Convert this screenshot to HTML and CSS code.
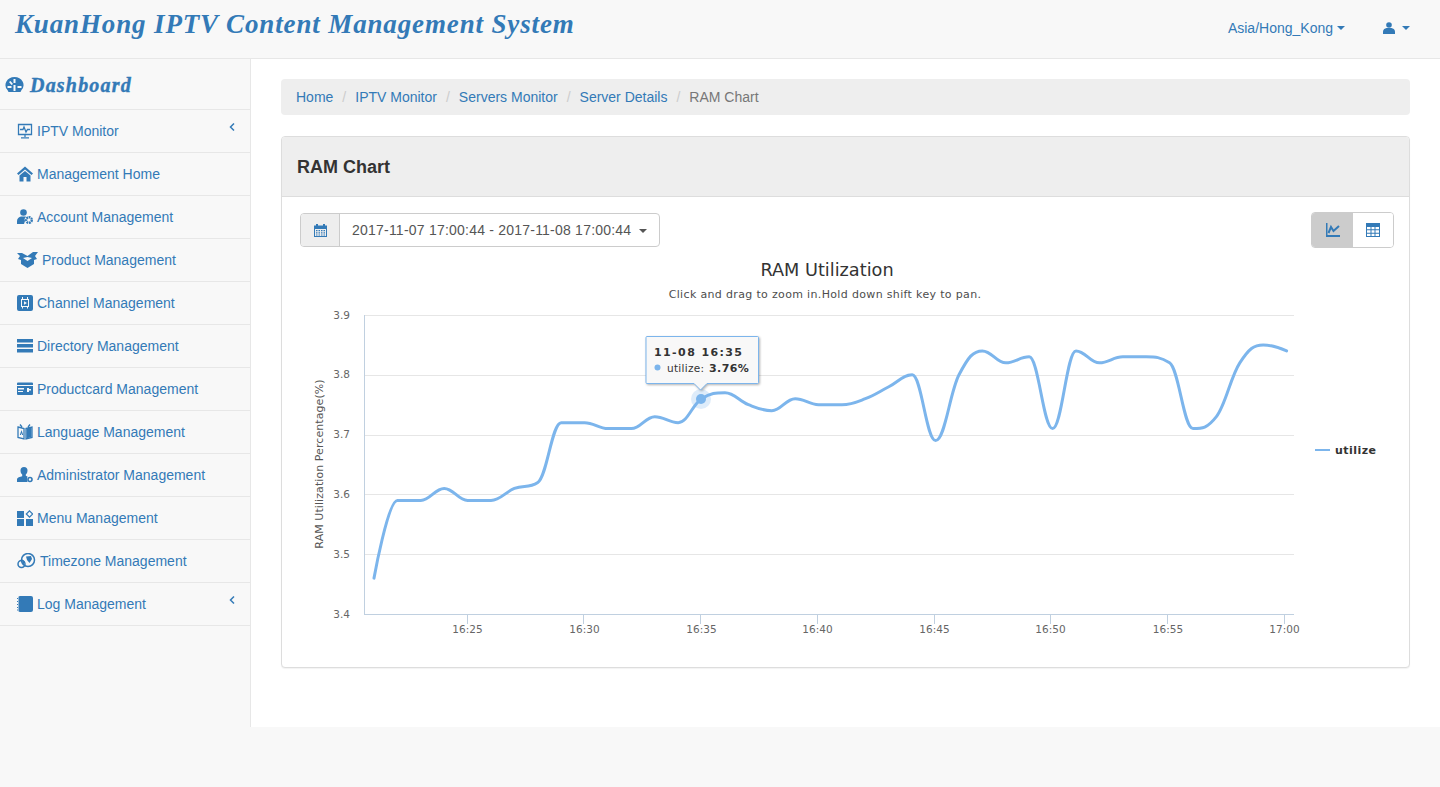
FILE: index.html
```html
<!DOCTYPE html>
<html lang="en">
<head>
<meta charset="utf-8">
<title>RAM Chart</title>
<link rel="stylesheet" href="styles.css">
</head>
<body>
<header class="navbar">
  <a class="brand">KuanHong IPTV Content Management System</a>
  <nav class="nav-right">
    <a class="nav-link">Asia/Hong_Kong<span class="caret"></span></a>
    <a class="nav-link nav-user">
      <svg class="user-ico" viewBox="0 0 12 12"><circle cx="6" cy="3" r="2.800"/><path d="M0 12V9.500C0 7.500 2 6.300 3.500 6h5C10 6.300 12 7.500 12 9.500V12z"/></svg>
      <span class="caret"></span>
    </a>
  </nav>
</header>
<div class="layout">
  <aside class="sidebar">
    <div class="side-head">
      <svg class="ico" viewBox="0 0 18 16"><path fill-rule="evenodd" d="M9 0a9 8 0 0 1 7 13l-1 2H3l-1-2A9 8 0 0 1 9 0zM8 2v4h2V2zM3.500 5l2.500 3 1.500-1-2.500-3zM2 9v2h4V9zM8 8v6h2V8zM12 9v2h4V9z"/></svg>
      <span class="side-title">Dashboard</span>
    </div>
    <ul class="menu">
      <li><a class="item">
        <svg class="ico" viewBox="0 0 16 16"><path d="M1.500 1.500h13v10h-13zM3 6.500h3l1-2.500 2 5 1.500-2.500H13M8 11.500V14M4 14.800h8" fill="none" stroke="currentColor" stroke-width="1.300"/></svg>
        <span>IPTV Monitor</span><svg class="chev" viewBox="0 0 6 8"><path d="M5 .5L1.500 4 5 7.500" fill="none" stroke="currentColor" stroke-width="1.500"/></svg></a></li>
      <li><a class="item">
        <svg class="ico" viewBox="0 0 16 16"><path d="M8 .5L0 7.500 1.500 9 8 3.500 14.500 9 16 7.500zM2.500 9.500L8 5l5.500 4.500v6h-4V11h-3v4.500h-4z"/></svg>
        <span>Management Home</span></a></li>
      <li><a class="item">
        <svg class="ico" viewBox="0 0 16 16"><circle cx="6.500" cy="3.500" r="3.300"/><path d="M0 15v-3c0-2.500 2-4 4-4.500h5L7.500 10l.5 2-1 3z"/><circle cx="12" cy="11" r="2.800" fill="none" stroke="currentColor" stroke-width="2.400" stroke-dasharray="1.800 .7"/></svg>
        <span>Account Management</span></a></li>
      <li><a class="item">
        <svg class="ico ico-wide" viewBox="0 0 21 16"><path d="M0 1l5 0 5.500 3L16 0h5l-3 4 2 3-3 1v4l-6.500 4L4 12V8L1 7l2-3zM6 6l4.500 3L15 6l-4.500-1z"/></svg>
        <span>Product Management</span></a></li>
      <li><a class="item">
        <svg class="ico" viewBox="0 0 16 16"><path fill-rule="evenodd" d="M2 0h12a2 2 0 0 1 2 2v12a2 2 0 0 1-2 2H2a2 2 0 0 1-2-2V2a2 2 0 0 1 2-2zM4 4v8h8V4zM5 5h6v6H5zM7 6.200v3.600L10 8zM5 2h1v2H5zM10 2h1v2h-1zM5 12h1v1.500H5zM10 12h1v1.500h-1z"/></svg>
        <span>Channel Management</span></a></li>
      <li><a class="item">
        <svg class="ico" viewBox="0 0 16 16"><path d="M0 1h16v3.500H0zM0 6h16v3.500H0zM0 11h16v3.500H0z"/></svg>
        <span>Directory Management</span></a></li>
      <li><a class="item">
        <svg class="ico" viewBox="0 0 16 16"><path fill-rule="evenodd" d="M1 1.500h14a1 1 0 0 1 1 1V13a1 1 0 0 1-1 1H1a1 1 0 0 1-1-1V2.500a1 1 0 0 1 1-1zM0 4v1h16V4zM1 7v1.500h6V7zM1 10v1h5v-1zM10 7v4h2V9.500h2V8h-2V7z"/></svg>
        <span>Productcard Management</span></a></li>
      <li><a class="item">
        <svg class="ico" viewBox="0 0 16 16"><path d="M1 3l6 1.500V15L1 13.500zM9 4.500L15 3v10.500L9 15zM3 .5l2 2.500M13 .5l-2 2.500" fill="none" stroke="currentColor" stroke-width="1.300"/><path d="M9.500 4.500l5-1.500v10l-5 1.500zM2.800 11l1.700-5 1.700 5H5.100l-.6-2-.6 2z"/></svg>
        <span>Language Management</span></a></li>
      <li><a class="item">
        <svg class="ico" viewBox="0 0 16 16"><path d="M7 0a3.500 3.500 0 0 1 3.500 3.500c0 2-.7 3.200-1.700 4v1.200l1.700.8-.5 2 .5 3.500H0v-2.500c0-2 3-2.800 5.200-3.300V7.500c-1-.8-1.700-2-1.700-4A3.500 3.500 0 0 1 7 0z"/><circle cx="13" cy="12.500" r="2" fill="none" stroke="currentColor" stroke-width="1.600"/></svg>
        <span>Administrator Management</span></a></li>
      <li><a class="item">
        <svg class="ico" viewBox="0 0 16 16"><path d="M0 1h7v7H0zM0 9h7v7H0zM9 9h7v7H9z"/><path d="M12.500.8l3.200 3.200-3.200 3.200L9.300 4z" fill="none" stroke="currentColor" stroke-width="1.200"/></svg>
        <span>Menu Management</span></a></li>
      <li><a class="item">
        <svg class="ico ico-globe" viewBox="0 0 19 16"><circle cx="11" cy="7" r="6.500" fill="none" stroke="currentColor" stroke-width="1.500"/><path d="M9 3.500l5-.5 1 3-2.500 4L10 7zM5 6l2 2 1 1-2 3z"/><circle cx="4.500" cy="11" r="3.500" fill="none" stroke="currentColor" stroke-width="1.500"/></svg>
        <span>Timezone Management</span></a></li>
      <li><a class="item">
        <svg class="ico" viewBox="0 0 16 16"><path d="M3 0h11a2 2 0 0 1 2 2v12a2 2 0 0 1-2 2H3a2 2 0 0 1-1.500-.7V.7A2 2 0 0 1 3 0z"/><path d="M0 2.500h1M0 5.500h1M0 8.500h1M0 11.500h1M0 14h1" stroke="currentColor"/></svg>
        <span>Log Management</span><svg class="chev" viewBox="0 0 6 8"><path d="M5 .5L1.500 4 5 7.500" fill="none" stroke="currentColor" stroke-width="1.500"/></svg></a></li>
    </ul>
  </aside>
  <main class="content">
    <ol class="breadcrumb">
      <li><a>Home</a></li>
      <li><a>IPTV Monitor</a></li>
      <li><a>Servers Monitor</a></li>
      <li><a>Server Details</a></li>
      <li class="active">RAM Chart</li>
    </ol>
    <section class="card">
      <h2 class="card-head">RAM Chart</h2>
      <div class="card-body">
        <div class="toolbar">
          <div class="range">
            <span class="range-addon">
              <svg class="cal" viewBox="0 0 13 13"><path fill-rule="evenodd" d="M0 1.500h2V0h2v1.500h5V0h2v1.500h2V13H0zM1 5v7h11V5zM2 6h1.500v1.200H2zM4.500 6H6v1.200H4.500zM7 6h1.500v1.200H7zM9.500 6H11v1.200H9.500zM2 8.200h1.500v1.200H2zM4.500 8.200H6v1.200H4.500zM7 8.200h1.500v1.200H7zM9.500 8.200H11v1.200H9.500zM2 10.400h1.500v1.200H2zM4.500 10.400H6v1.200H4.500zM7 10.400h1.500v1.200H7zM9.500 10.400H11v1.200H9.500z"/></svg>
            </span>
            <span class="range-value">2017-11-07 17:00:44 - 2017-11-08 17:00:44<span class="caret caret-dark"></span></span>
          </div>
          <div class="view-switch">
            <span class="view-btn is-active">
              <svg class="view-ico" viewBox="0 0 14 14"><path d="M0 0h1.500v12H14v2H0z"/><path d="M2.500 10l2.500-6 2.500 4L13 3" fill="none" stroke="currentColor" stroke-width="2"/></svg>
            </span>
            <span class="view-btn">
              <svg class="view-ico" viewBox="0 0 14 14"><path fill-rule="evenodd" d="M0 0h14v14H0zM1 4v2.300h3.500V4zM5.500 4v2.300h3V4zM9.500 4v2.300H13V4zM1 7.300v2.400h3.500V7.300zM5.500 7.300v2.400h3V7.300zM9.500 7.300v2.400H13V7.300zM1 10.700V13h3.500v-2.300zM5.500 10.700V13h3v-2.300zM9.500 10.700V13H13v-2.300z"/></svg>
            </span>
          </div>
        </div>
        <svg class="chart" viewBox="282 250 1127 417">
          <text class="c-title" x="827" y="276">RAM Utilization</text>
          <text class="c-sub" x="825" y="298">Click and drag to zoom in.Hold down shift key to pan.</text>
          <g class="grid">
            <path d="M364 315.500H1294M364 375.500H1294M364 435.500H1294M364 494.500H1294M364 554.500H1294"/>
          </g>
          <g class="axis">
            <path d="M364.500 315V614M364 614.500H1294M467.500 614V624M583.500 614V624M700.500 614V624M817.500 614V624M934.500 614V624M1050.500 614V624M1167.500 614V624M1284.500 614V624"/>
          </g>
          <g class="y-labels">
            <text x="350" y="319">3.9</text>
            <text x="350" y="378">3.8</text>
            <text x="350" y="438">3.7</text>
            <text x="350" y="498">3.6</text>
            <text x="350" y="558">3.5</text>
            <text x="350" y="618">3.4</text>
          </g>
          <g class="x-labels">
            <text x="467.500" y="633">16:25</text>
            <text x="584.500" y="633">16:30</text>
            <text x="701.500" y="633">16:35</text>
            <text x="817.500" y="633">16:40</text>
            <text x="934.500" y="633">16:45</text>
            <text x="1050.500" y="633">16:50</text>
            <text x="1168" y="633">16:55</text>
            <text x="1284.500" y="633">17:00</text>
          </g>
          <text class="c-ytitle" transform="translate(323 464) rotate(-90)">RAM Utilization Percentage(%)</text>
          <path id="ram-line" class="line"/>
          <circle class="halo" cx="701" cy="399" r="10"/>
          <circle class="dot" cx="701" cy="399" r="5"/>
          <path class="legend-line" d="M1315 450H1330"/>
          <text class="legend-text" x="1335" y="454">utilize</text>
          <path class="tip-box" d="M647 336.500H757.500a1 1 0 0 1 1 1V382.500a1 1 0 0 1-1 1H707L700.500 390 694 383.500H647a1 1 0 0 1-1-1V337.500a1 1 0 0 1 1-1z"/>
          <text class="tip-head" x="654" y="356">11-08 16:35</text>
          <circle class="tip-dot" cx="657.500" cy="367.500" r="3"/>
          <text class="tip-label" x="667" y="372">utilize:</text>
          <text class="tip-val" x="709" y="372">3.76%</text>
        </svg>
      </div>
    </section>
  </main>
</div>
<script src="chart.js"></script>
</body>
</html>
```
FILE: styles.css
```css
* { box-sizing: border-box; }
html, body { margin: 0; padding: 0; }
body {
  background: #f8f8f8;
  color: #333;
  font: 14px/20px "Liberation Sans", Arial, sans-serif;
}
a { color: #337ab7; text-decoration: none; }

.navbar {
  height: 59px;
  background: #f8f8f8;
  border-bottom: 1px solid #e7e7e7;
  display: flex;
  justify-content: space-between;
  padding: 0 30px 0 15px;
}
.brand {
  font: italic bold 27px/48px "Liberation Serif", serif;
  letter-spacing: 0.86px;
  color: #337ab7;
}
.nav-right { display: flex; align-items: flex-start; }
.nav-link { display: flex; align-items: center; height: 20px; line-height: 20px; margin-top: 18px; }
.nav-user { margin-left: 38px; }
.user-ico { width: 12px; height: 12px; fill: #337ab7; }
.caret {
  display: inline-block;
  width: 0;
  height: 0;
  margin-left: 4px;
  border-top: 4px solid #337ab7;
  border-left: 4px solid transparent;
  border-right: 4px solid transparent;
}
.nav-user .caret { margin-left: 7px; }
.caret-dark { border-top-color: #555; margin-left: 8px; vertical-align: middle; }

.layout { display: flex; height: 668px; }
.sidebar {
  width: 251px;
  flex: none;
  background: #f8f8f8;
  border-right: 1px solid #e7e7e7;
}
.side-head {
  height: 51px;
  display: flex;
  align-items: center;
  gap: 6px;
  padding: 2px 0 0 5px;
  border-bottom: 1px solid #e7e7e7;
  font: italic bold 20px/24px "Liberation Serif", serif;
  color: #337ab7;
}
.side-head .ico { width: 19px; }
.side-title { letter-spacing: 1.2px; -webkit-text-stroke: .4px #337ab7; }
.menu { list-style: none; margin: 0; padding: 0; }
.menu li { border-bottom: 1px solid #e7e7e7; height: 43px; }
.item {
  height: 42px;
  display: flex;
  align-items: center;
  gap: 4px;
  padding: 0 15px 0 17px;
}
.ico { width: 16px; height: 16px; fill: currentColor; flex: none; }
.ico-wide { width: 21px; }
.ico-globe { width: 19px; }
.chev { width: 6px; height: 8px; margin: 0 0 8px auto; flex: none; }

.content { flex: 1; background: #fff; padding: 20px 30px 0; min-width: 0; }
.breadcrumb {
  display: flex;
  list-style: none;
  margin: 0 0 21px;
  padding: 8px 15px;
  height: 36px;
  background: #eee;
  border-radius: 4px;
}
.breadcrumb li + li::before { content: "/"; color: #ccc; padding: 0 9px; }
.breadcrumb .active { color: #777; }

.card {
  height: 532px;
  background: #fff;
  border: 1px solid #ddd;
  border-radius: 4px;
  box-shadow: 0 1px 1px rgba(0, 0, 0, .05);
  overflow: hidden;
}
.card-head {
  margin: 0;
  height: 60px;
  background: #eee;
  border-bottom: 1px solid #ddd;
  padding: 0 15px;
  font: bold 18px/60px "Liberation Sans", Arial, sans-serif;
  color: #333;
}
.toolbar {
  display: flex;
  justify-content: space-between;
  align-items: flex-start;
  height: 53px;
  padding: 15px 15px 0 18px;
}
.range {
  display: flex;
  height: 34px;
  margin-top: 1px;
  border: 1px solid #ccc;
  border-radius: 4px;
  color: #555;
}
.range-addon {
  width: 39px;
  background: #eee;
  border-right: 1px solid #ccc;
  border-radius: 3px 0 0 3px;
  display: flex;
  align-items: center;
  justify-content: center;
}
.cal { width: 13px; height: 13px; fill: #337ab7; }
.range-value { padding: 6px 12px; white-space: nowrap; letter-spacing: .22px; }
.view-switch {
  display: flex;
  height: 36px;
  border: 1px solid #ccc;
  border-radius: 4px;
  overflow: hidden;
}
.view-btn {
  width: 40px;
  display: flex;
  align-items: center;
  justify-content: center;
  background: #fff;
}
.view-btn.is-active { background: #ccc; width: 41px; }
.view-ico { width: 14px; height: 14px; fill: #337ab7; color: #337ab7; }

.chart { display: block; width: 1127px; height: 417px; font-family: "DejaVu Sans", Verdana, sans-serif; }
.c-title { font-size: 17.700px; fill: #333; text-anchor: middle; }
.c-sub { font-size: 11px; fill: #4d4d4d; text-anchor: middle; letter-spacing: .34px; }
.c-ytitle { font-size: 11px; fill: #555; text-anchor: middle; letter-spacing: .07px; }
.grid path { fill: none; stroke: #e6e6e6; }
.axis path { fill: none; stroke: #c0d0e0; }
.y-labels text { font-size: 10.500px; fill: #666; text-anchor: end; }
.x-labels text { font-size: 10.500px; fill: #666; text-anchor: middle; }
.line { fill: none; stroke: #7cb5ec; stroke-width: 3; stroke-linecap: round; stroke-linejoin: round; }
.halo { fill: #7cb5ec; fill-opacity: .25; }
.dot { fill: #7cb5ec; }
.legend-line { fill: none; stroke: #7cb5ec; stroke-width: 2; }
.legend-text { font-size: 11px; font-weight: bold; fill: #333; letter-spacing: .45px; }
.tip-box { fill: #f8f8f8; stroke: #7cb5ec; filter: drop-shadow(1px 1px 1px rgba(0, 0, 0, .3)); }
.tip-head { font-size: 11px; font-weight: bold; fill: #333; letter-spacing: 1.400px; }
.tip-dot { fill: #7cb5ec; }
.tip-label { font-size: 10.500px; fill: #333; letter-spacing: .3px; }
.tip-val { font-size: 11px; font-weight: bold; fill: #333; letter-spacing: .4px; }
```
FILE: chart.js
```js
// Highcharts-style spline for the RAM utilisation series (one value per minute, from 16:21).
var values = [3.46, 3.59, 3.59, 3.61, 3.59, 3.59, 3.61, 3.62, 3.72, 3.72,
  3.71, 3.71, 3.73, 3.72, 3.76, 3.77, 3.75, 3.74, 3.76, 3.75,
  3.75, 3.76, 3.78, 3.80, 3.69, 3.80, 3.84, 3.82, 3.83, 3.71,
  3.84, 3.82, 3.83, 3.83, 3.82, 3.71, 3.73, 3.82, 3.85, 3.84];

var pts = values.map(function (v, i) {
  return [374 + i * 23.4, 614 - (v - 3.4) * 598];
});

function controls(i) {
  var p = pts[i], a = pts[i - 1], b = pts[i + 1];
  if (!a || !b) { return null; }
  var lx = (1.5 * p[0] + a[0]) / 2.5, ly = (1.5 * p[1] + a[1]) / 2.5;
  var rx = (1.5 * p[0] + b[0]) / 2.5, ry = (1.5 * p[1] + b[1]) / 2.5;
  var c = (ry - ly) * (rx - p[0]) / (rx - lx) + p[1] - ry;
  ly += c; ry += c;
  if (ly > a[1] && ly > p[1]) { ly = Math.max(a[1], p[1]); ry = 2 * p[1] - ly; }
  else if (ly < a[1] && ly < p[1]) { ly = Math.min(a[1], p[1]); ry = 2 * p[1] - ly; }
  if (ry > b[1] && ry > p[1]) { ry = Math.max(b[1], p[1]); ly = 2 * p[1] - ry; }
  else if (ry < b[1] && ry < p[1]) { ry = Math.min(b[1], p[1]); ly = 2 * p[1] - ry; }
  return { lx: lx, ly: ly, rx: rx, ry: ry };
}

var d = "M" + pts[0][0] + " " + pts[0][1];
for (var i = 1; i < pts.length; i++) {
  var c0 = controls(i - 1), c1 = controls(i);
  d += " C" + (c0 ? c0.rx + " " + c0.ry : pts[i - 1][0] + " " + pts[i - 1][1]) + " " +
    (c1 ? c1.lx + " " + c1.ly : pts[i][0] + " " + pts[i][1]) + " " + pts[i][0] + " " + pts[i][1];
}
document.getElementById("ram-line").setAttribute("d", d);
```
